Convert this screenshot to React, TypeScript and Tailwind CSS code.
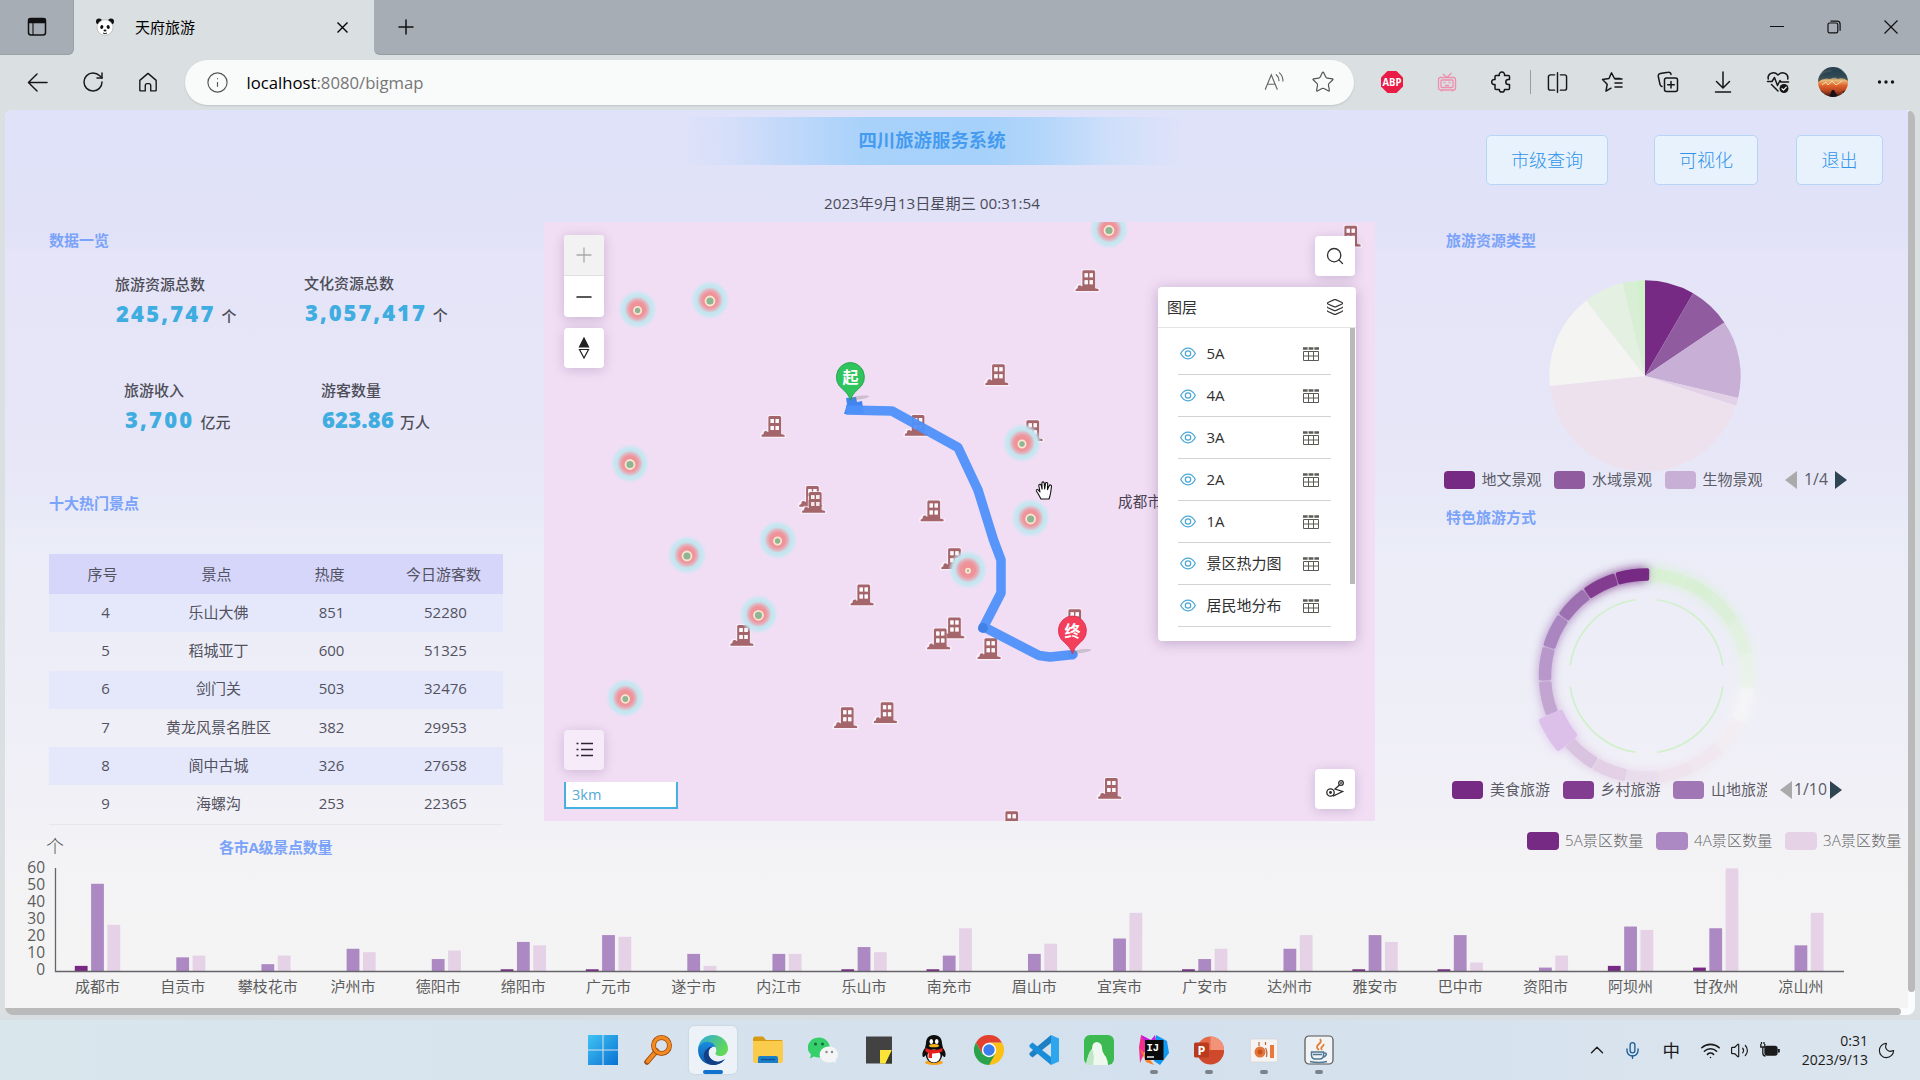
import React from "react";
import {
  RotateCw, Info, Star, Plus, Minus, X, Search, Layers, Mic, Wifi, Volume2, Moon, ChevronUp, List,
} from "lucide-react";

const SANS = "font-['Open_Sans','Noto_Sans_CJK_SC',sans-serif]";

/* ---------- browser chrome ---------- */

function Panda() {
  return (
    <svg width="20" height="20" viewBox="0 0 20 20">
      <circle cx="4" cy="4.5" r="3" fill="#111" />
      <circle cx="16" cy="4.5" r="3" fill="#111" />
      <ellipse cx="10" cy="10.5" rx="8" ry="7.8" fill="#fff" stroke="#999" strokeWidth=".5" />
      <ellipse cx="6.8" cy="10" rx="1.5" ry="2" fill="#111" transform="rotate(25 6.8 10)" />
      <ellipse cx="13.2" cy="10" rx="1.5" ry="2" fill="#111" transform="rotate(-25 13.2 10)" />
      <ellipse cx="10" cy="13.6" rx="1.5" ry="1" fill="#111" />
      <path d="M8 16q2 1.4 4 0" stroke="#111" fill="none" strokeWidth=".9" />
    </svg>
  );
}

function TabBar() {
  return (
    <div className="flex h-[54.500px] bg-[#dadfe1] shrink-0">
      <div className="w-[74px] rounded-br-md border-b border-r border-[#9aa0a7] bg-[#a7adb5] flex items-center justify-center">
        <svg width="20" height="20" viewBox="0 0 20 20" fill="none" stroke="#111" strokeWidth="1.5">
          <rect x="1.5" y="1.5" width="17" height="16.5" rx="2.5" />
          <path d="M2 2.2h16v3.3H2z" fill="#111" />
          <path d="M6 5v13" strokeWidth="1.1" />
        </svg>
      </div>
      <div className="flex w-[300px] items-center pl-[21px] text-[15px] text-black">
        <Panda />
        <span className="ml-5 w-[202px]">天府旅游</span>
        <svg width="11" height="11" viewBox="0 0 11 11" stroke="#000" strokeWidth="1.400"><path d="M.5.5l10 10M10.500.5l-10 10" /></svg>
      </div>
      <div className="flex flex-1 items-center rounded-bl-md border-b border-[#969ca3] bg-[#a7adb5] pl-[20px]">
        <Plus size={24} strokeWidth={1.5} color="#111" />
        <div className="ml-auto flex items-center">
          <div className="flex w-[57px] justify-center"><div className="h-px w-3.5 bg-[#111]" /></div>
          <div className="flex w-[57px] justify-center">
            <svg width="14" height="14" viewBox="0 0 14 14" fill="none" stroke="#111" strokeWidth="1.2">
              <rect x="1" y="3" width="9.8" height="9.8" rx="1.6" />
              <path d="M3.5 1.2h6.6a3 3 0 0 1 3 3v6.5" />
            </svg>
          </div>
          <div className="flex w-[58px] justify-center">
            <svg width="14" height="14" viewBox="0 0 14 14" stroke="#111" strokeWidth="1.2"><path d="M.5 .5l13 13M13.5 .5l-13 13" /></svg>
          </div>
        </div>
      </div>
    </div>
  );
}

function Cell({ children }: { children: React.ReactNode }) {
  return <div className="flex w-[55.2px] shrink-0 items-center justify-center text-[#1b1b1b]">{children}</div>;
}

function Stroke({ d, size = 22, w = 1.5 }: { d: string; size?: number; w?: number }) {
  return (
    <svg width={size} height={size} viewBox="0 0 22 22" fill="none" stroke="#161616" strokeWidth={w} strokeLinecap="round" strokeLinejoin="round">
      <path d={d} />
    </svg>
  );
}

function Toolbar() {
  return (
    <div className="flex h-[55.500px] shrink-0 items-center bg-[#dadfe1] pl-[10px]">
      <Cell>
        <Stroke d="M21 11H1.5M10.5 2L1.5 11l9 9" size={21} />
      </Cell>
      <Cell><RotateCw size={24} strokeWidth={1.5} /></Cell>
      <Cell>
        <Stroke d="M2 9.2L11 1.5l9 7.7V20a.8.8 0 0 1-.8.8H14v-6a2 2 0 0 0-2-2h-2a2 2 0 0 0-2 2v6H2.800a.8.8 0 0 1-.8-.8z" size={20} />
      </Cell>
      <div className="ml-[9px] flex h-[45px] w-[1169px] items-center rounded-full bg-[#f9fafa] pl-[21px] text-[16.700px] shadow-[0_1px_2px_rgba(0,0,0,0.12)]">
        <Info size={23} strokeWidth={1.2} color="#555" />
        <span className="ml-[18px] text-[#777]"><span className="text-black">localhost</span>:8080/bigmap</span>
        <div className="ml-auto flex items-center pr-[19px]">
          <svg width="20" height="20" viewBox="0 0 22 22" fill="none" stroke="#666" strokeWidth="1.3" strokeLinecap="round">
            <path d="M1.500 19L8 3l6.500 16M4 13.500h8M13.500 3q3 2.500 3 6.500M17 1q4 3.500 3.800 9" />
          </svg>
          <Star className="ml-[27px]" size={24} strokeWidth={1.2} color="#555" />
        </div>
      </div>
      <div className="ml-[10.500px] flex h-full items-center">
        <Cell>
          <svg width="22" height="22" viewBox="0 0 22 22">
            <path d="M6.500 0h9L22 6.500v9L15.500 22h-9L0 15.500v-9z" fill="#e81c46" />
            <text x="11" y="14.700" fontSize="10" fontWeight="700" textAnchor="middle" fill="#fff" textLength="19" lengthAdjust="spacingAndGlyphs" fontFamily="Open Sans, sans-serif">ABP</text>
          </svg>
        </Cell>
        <Cell>
          <svg width="20" height="20" viewBox="0 0 20 20" fill="none" stroke="#ee8fae" strokeWidth="1.300">
            <rect x="1.500" y="5.500" width="17" height="12.500" rx="2" />
            <rect x="4" y="8" width="12" height="7.500" rx="1" />
            <path d="M10 5.500L6 2M10 5.500L14.500 1M6.500 11l2-1M13.500 11l-2-1M8 13.500h4M4.500 18v1.500M15.500 18v1.500" />
          </svg>
        </Cell>
        <Cell>
          <Stroke size={22} d="M5 4.500h3.300a2.700 2.700 0 1 1 5.200 0H17.500a1 1 0 0 1 1 1V8.500h-1.200a2.500 2.500 0 0 0 0 5h1.200V17.500a1 1 0 0 1-1 1h-4a2.600 2.600 0 1 1-5.200 0H5a1 1 0 0 1-1-1v-4a2.600 2.600 0 1 1 0-5v-3a1 1 0 0 1 1-1z" />
        </Cell>
        <div className="-mr-px h-6 w-px bg-[#9a9da0]" />
        <Cell><Stroke size={21} d="M8 3H3.500a2 2 0 0 0-2 2v12a2 2 0 0 0 2 2H8M14 3h4.500a2 2 0 0 1 2 2v12a2 2 0 0 1-2 2H14M11 .8v20.500" /></Cell>
        <Cell><Stroke size={22} d="M19 7.500h-5.500L10.500 1.800 8 7.500l-6.500 1 4.700 4.700-1.200 7 5-3M14 12h7M14 16h7M14 8h7" /></Cell>
        <Cell><Stroke size={22} d="M9.500 7h9a2 2 0 0 1 2 2v9.500a2 2 0 0 1-2 2h-9a2 2 0 0 1-2-2V9a2 2 0 0 1 2-2zM14 10.500v6.500M10.700 13.700h6.600M5 15.500a3 3 0 0 1-2-2.200L1.300 5.500a2.600 2.600 0 0 1 2-3L11 1.200a2.500 2.500 0 0 1 3 2.300" /></Cell>
        <Cell><Stroke size={22} d="M11 1v15.500M4.500 10.500L11 17l6.500-6.500M3.500 21h15" /></Cell>
        <Cell>
          <svg width="24" height="24" viewBox="0 0 24 24" fill="none" stroke="#161616" strokeWidth="1.500" strokeLinecap="round" strokeLinejoin="round">
            <path d="M2.300 9C1 4 7.500.5 12 5c4.500-4.500 11-1 9.700 4M1.500 11.500H6l2.500-4 3 8 2.500-5 1 1.500h7.500M5.500 14.500L12 21" />
            <circle cx="18" cy="18.500" r="4.500" fill="#161616" stroke="none" />
            <path d="M16 18.700l1.500 1.400 2.800-3" stroke="#fff" strokeWidth="1.200" />
          </svg>
        </Cell>
        <Cell>
          <svg width="30" height="30" viewBox="0 0 30 30">
            <defs>
              <clipPath id="av"><circle cx="15" cy="15" r="15" /></clipPath>
              <linearGradient id="avg" x1="0" y1="0" x2="0" y2="1">
                <stop offset="0" stopColor="#20394c" /><stop offset=".3" stopColor="#5f6b66" /><stop offset=".45" stopColor="#e8b878" />
                <stop offset=".62" stopColor="#e0622c" /><stop offset=".8" stopColor="#b5451f" /><stop offset="1" stopColor="#2b1414" />
              </linearGradient>
            </defs>
            <g clipPath="url(#av)">
              <rect width="30" height="30" fill="url(#avg)" />
              <path d="M0 11q5-7 12-6 4-4 10-2l8 6v5q-6-5-10-2-3-3-8 0-6-2-12 3z" fill="#1f3c4d" opacity=".75" />
              <path d="M11 30l3-7h2l4 7zM0 22l5 3-5 4zM30 22l-6 3 6 4z" fill="#1a0f14" />
              <path d="M4 18l4-3 2 3 4-4 4 4 6-4" stroke="#f8dca4" fill="none" />
            </g>
          </svg>
        </Cell>
        <Cell>
          <svg className="-ml-1" width="18" height="4" viewBox="0 0 18 4" fill="#161616"><circle cx="2.500" cy="2" r="1.700" /><circle cx="9" cy="2" r="1.700" /><circle cx="15.500" cy="2" r="1.700" /></svg>
        </Cell>
      </div>
    </div>
  );
}

/* ---------- page header ---------- */

function NavButton({ label, cls }: { label: string; cls: string }) {
  return (
    <button className={`h-[50px] rounded-[5px] border border-[#b7d5f5] bg-[#e8f2fd] text-[18px] font-light text-[#2f93ea] ${cls}`}>{label}</button>
  );
}

function Header() {
  return (
    <div className="flex h-[112px] pl-[675px]">
      <div className="flex w-[504px] flex-col items-center pt-[7px]">
        <div className="flex h-[48px] w-full items-center justify-center bg-[linear-gradient(90deg,rgba(163,208,250,0)_0%,rgba(203,219,250,0.5)_10%,#c3d9fa_20%,#a9d2fa_36%,#a5d1fa_60%,#b3d6fa_72%,#cedffa_85%,rgba(200,215,250,0)_100%)]">
          <h1 className="-mt-0.5 text-[18.400px] font-bold text-[#459bef]">四川旅游服务系统</h1>
        </div>
        <div className="mt-[27px] text-[15.200px] leading-[22px] text-[#4b4b57]">2023年9月13日星期三 00:31:54</div>
      </div>
      <div className="ml-auto flex pr-[25px] pt-[25px]">
        <NavButton label="市级查询" cls="w-[122px]" />
        <NavButton label="可视化" cls="ml-[46px] w-[104px]" />
        <NavButton label="退出" cls="ml-[38px] w-[87px]" />
      </div>
    </div>
  );
}

/* ---------- left column ---------- */

function SectionTitle({ children, cls = "" }: { children: string; cls?: string }) {
  return <h2 className={`h-[22px] text-[15px] font-bold leading-[22px] text-[#7ba3f9] ${cls}`}>{children}</h2>;
}

function Stat({ label, value, unit, cls, num }: { label: string; value: string; unit: string; cls: string; num: string }) {
  return (
    <div className={cls}>
      <div className="text-[15px] font-medium leading-[22px] text-[#4d4d57]">{label}</div>
      <div className="flex h-[36px] items-baseline leading-[36px]">
        <span className={`pl-px text-[22px] font-extrabold text-[#3fade0] ${num}`}>{value}</span>
        <span className="ml-1.5 text-[15px] font-medium text-[#4d4d57]">{unit}</span>
      </div>
    </div>
  );
}

const spots = [
  ["4", "乐山大佛", "851", "52280"],
  ["5", "稻城亚丁", "600", "51325"],
  ["6", "剑门关", "503", "32476"],
  ["7", "黄龙风景名胜区", "382", "29953"],
  ["8", "阆中古城", "326", "27658"],
  ["9", "海螺沟", "253", "22365"],
];

function LeftColumn() {
  return (
    <div className="w-[539px] shrink-0 pl-[44px] pt-[7px]">
      <SectionTitle>数据一览</SectionTitle>
      <div className="mt-[22px] flex h-[106px] pl-[66px]">
        <Stat label="旅游资源总数" value="245,747" unit="个" cls="w-[189px]" num="tracking-[2.200px]" />
        <Stat label="文化资源总数" value="3,057,417" unit="个" cls="-mt-px" num="tracking-[2px]" />
      </div>
      <div className="flex h-[113px] pl-[75px]">
        <Stat label="旅游收入" value="3,700" unit="亿元" cls="w-[197px]" num="tracking-[2.200px]" />
        <Stat label="游客数量" value="623.86" unit="万人" cls="" num="tracking-[0.200px]" />
      </div>
      <SectionTitle>十大热门景点</SectionTitle>
      <div className="mt-[40px] w-[454px] border-b border-[#e6e6ee] text-[15px] text-[#525260]">
        <div className="grid h-[40px] grid-cols-[113px_113px_113px_115px] items-center bg-[#d6d6fa] text-center">
          <span className="pr-[6px]">序号</span>
          <span className="pr-[4px]">景点</span>
          <span className="pr-[4px]">热度</span>
          <span className="pr-[4px]">今日游客数</span>
        </div>
        {spots.map((r, i) => (
          <div key={r[0]} className={`grid h-[38.300px] grid-cols-[113px_113px_113px_115px] items-center pb-[2px] text-center ${i % 2 ? "" : "bg-[#e5e8fb]"}`}>
            {r.map((c, j) => (
              <span key={j} className="whitespace-nowrap">{c}</span>
            ))}
          </div>
        ))}
      </div>
    </div>
  );
}

/* ---------- map ---------- */

const heat: [number, number, number][] = [
  [637.6, 310.5, 0.8], [710, 301, 1], [1109, 230.5, 1], [630, 464.5, 1], [1022, 444, 0.8], [1030.600, 519, 1],
  [687, 556, 1], [777.600, 541, 0.8], [758.500, 615.300, 1], [968, 570.700, 0.45], [625.300, 699, 0.85],
];
const buildings: [number, number][] = [
  [1075, 270], [984.700, 364], [904.300, 414.700], [761, 415.700], [1019, 420], [798.700, 485.700], [801.500, 491.700], [920, 500.300],
  [940.700, 548], [850, 584.300], [729.800, 624.700], [940.700, 617.300], [926.500, 628.300], [977, 638], [1061, 609], [833.500, 707],
  [873.300, 702], [1097.600, 777.700], [998, 811], [1337, 225.600],
];

function Building({ x, y }: { x: number; y: number }) {
  return (
    <g transform={`translate(${x + 0.6} ${y + 0.2})`}>
      <path d="M6-1h14v19h4.500v4H-1.500V18l3.500-4.500 3.500.5z" fill="#fff" opacity=".5" />
      <path
        fillRule="evenodd"
        fill="#a5666b"
        d="M8 0h10q1.500 0 1.500 1.500V18l3.500 1v1.800H0V19.200l2-1.200q0-3 2.200-3 1.300 0 1.800 1.200l.8-.3V1.500Q6.800 0 8 0zM9 3v4h3.300V3zM14 3v4h3.300V3zM9 10v4h3.300v-4zM14 10v4h3.300v-4z"
      />
      <path d="M9 3v4h3.300V3zM14 3v4h3.300V3zM9 10v4h3.300v-4zM14 10v4h3.300v-4z" fill="#fff" opacity=".7" />
    </g>
  );
}

function Pin({ x, y, c, e, t }: { x: number; y: number; c: string; e: string; t: string }) {
  return (
    <g transform={`translate(${x} ${y})`}>
      <ellipse cx="9" cy="20.500" rx="10" ry="1.800" fill="#777" opacity=".3" transform="rotate(-8 10 21)" />
      <path d="M0 23.500C-1.500 17-7 13-11 9A14 14.500 0 1 1 11 9C7 13 1.500 17 0 23.500z" fill={c} stroke={e} strokeWidth=".8" />
      <text x="0" y="6" textAnchor="middle" fontSize="16" fontWeight="700" fill="#fff" fontFamily="Noto Sans CJK SC, sans-serif">{t}</text>
    </g>
  );
}

function Hand() {
  return (
    <svg x="1035.500" y="480.500" width="19" height="20" viewBox="0 0 19 20">
      <path
        d="M5.500 18.500L2.800 13.500.8 10.500c-.5-1.300 1-2 1.900-1.100L4.500 11.500 3.300 5c0-1.500 1.900-1.700 2.300-.3l1 4-.2-6.200c.1-1.500 2.100-1.500 2.300 0l.5 6 .8-5.700c.4-1.300 2.200-1 2.200.3l-.2 6 1.800-4c.7-1.200 2.300-.8 2.200.6L15.200 12l-.9 4-.8 2.500z"
        fill="#fff" stroke="#111" strokeWidth="1.100" strokeLinejoin="round"
      />
    </svg>
  );
}

const layers = ["5A", "4A", "3A", "2A", "1A", "景区热力图", "居民地分布"];

function EyeIcon() {
  return (
    <svg width="16" height="13" viewBox="0 0 16 13" fill="none" stroke="#4ba6d8" strokeWidth="1.200">
      <path d="M.7 6.500Q3.500 1.200 8 1.200t7.300 5.300Q12.500 11.800 8 11.800T.7 6.500z" />
      <circle cx="8" cy="6.500" r="2.700" />
    </svg>
  );
}

function TableIcon() {
  return (
    <svg width="16" height="14" viewBox="0 0 16 14" fill="none" stroke="#5b5b55" strokeWidth="1">
      <path d="M0 1.500h4.600M5.600 1.500h4.800M11.400 1.500H16" strokeWidth="2.600" />
      <path d="M.5 4.500h15v9H.5zM.5 9h15M5.500 4.500v9M10.500 4.500v9" />
    </svg>
  );
}

const ctl = "absolute flex h-10 w-10 items-center justify-center rounded-[4px] shadow-[0_2px_12px_rgba(80,50,110,0.22)]";

function MapPanel() {
  return (
    <div className="relative h-[599px] w-[831px] shrink-0 overflow-hidden bg-[#f1def4]">
      <svg width="831" height="599" viewBox="544 222 831 599" className="block">
        <defs>
          <radialGradient id="heat">
            <stop offset="0" stopColor="#f28a90" />
            <stop offset=".38" stopColor="#ee959c" />
            <stop offset=".52" stopColor="#e0b4c0" stopOpacity=".95" />
            <stop offset=".64" stopColor="#c5e3ed" />
            <stop offset=".78" stopColor="#c4e7f1" stopOpacity=".95" />
            <stop offset="1" stopColor="#d9e2f5" stopOpacity="0" />
          </radialGradient>
        </defs>
        {buildings.map(([x, y], i) => <Building key={i} x={x} y={y} />)}
        {heat.map(([x, y, s], i) => (
          <g key={i}>
            <circle cx={x} cy={y - 1} r="20" fill="url(#heat)" />
            <circle cx={x} cy={y} r={4.500 * s} fill="#8fb595" stroke="#f8e6cf" strokeWidth="1.800" />
          </g>
        ))}
        <path d="M846 398l10-1 1 5 5-1 2 13h-20l3-10z" fill="#4285f0" />
        <path d="M846 410L892 411L958 447.500L978 490L993.500 540L1001 560V593L983 628M980 625L1039 655.500L1050 657L1074 654.500" fill="none" stroke="#4f90fa" strokeOpacity=".95" strokeWidth="9.500" strokeLinejoin="round" />
        <circle cx="983" cy="628" r="5" fill="#4282e6" />
        <circle cx="1073" cy="654.500" r="4.700" fill="#4f90fa" />
        <Pin x={850.4} y={377} c="#2fc45e" e="#1b9a46" t="起" />
        <Pin x={1072.4} y={630.5} c="#f33f5b" e="#d92c48" t="终" />
        <text x="1118" y="507" fontSize="14.500" letterSpacing=".3" fill="#4a4150" fontFamily="Noto Sans CJK SC, sans-serif">成都市</text>
        <Hand />
      </svg>

      <div className="absolute left-5 top-[13px] flex h-[82px] w-10 flex-col overflow-hidden rounded-[4px] bg-white shadow-[0_2px_12px_rgba(80,50,110,0.25)]">
        <div className="flex h-[41px] items-center justify-center border-b border-[#e0dfe0] bg-[#f3f2f3]"><Plus size={24} strokeWidth={1.300} color="#aaa8aa" /></div>
        <div className="flex flex-1 items-center justify-center"><Minus size={24} strokeWidth={1.500} color="#222" /></div>
      </div>
      <div className={`${ctl} left-5 top-[106px] bg-white`}>
        <svg width="12" height="22" viewBox="0 0 12 22" stroke="#222" fill="none" strokeWidth="1.200"><path d="M6 1l4.500 9h-9z" fill="#222" /><path d="M1.500 12.500h9L6 21z" /></svg>
      </div>
      <div className={`${ctl} left-5 top-[507.500px] bg-[#f6ebf8]`}>
        <svg width="17" height="15" viewBox="0 0 17 15" stroke="#2c2430" strokeWidth="1.500"><path d="M5 1.500h12M5 7.500h12M5 13.500h12M.5 1.500h2M.5 7.500h2M.5 13.500h2" /></svg>
      </div>
      <div className="absolute left-5 top-[560px] h-[27px] w-[114px] border-2 border-t-0 border-[#45b1e0] bg-white pl-1.5 text-[14.500px] leading-[25px] text-[#56a9d4]">3km</div>
      <div className={`${ctl} left-[771px] top-[13.500px] bg-white`}><Search size={20} strokeWidth={1.600} color="#333" /></div>
      <div className={`${ctl} left-[771px] top-[547px] bg-white`}>
        <svg width="18" height="18" viewBox="0 0 18 18" fill="none" stroke="#2a2a2a" strokeWidth="1.300"><circle cx="4.500" cy="12.500" r="3.700" /><circle cx="4.500" cy="12.500" r=".8" fill="#2a2a2a" /><circle cx="15" cy="3" r="2.300" /><circle cx="15" cy="3" r=".3" /><path d="M8.500 15.500l8-4-7.500-2.500L13.500 5M7 16.200l3-1.500" /></svg>
      </div>

      <div className="absolute left-[614px] top-[65px] flex h-[354px] w-[198px] flex-col overflow-hidden rounded-[4px] bg-white text-[15px] text-[#303030] shadow-[0_2px_14px_rgba(80,50,110,0.3)]">
        <div className="flex h-[41px] shrink-0 items-center justify-between border-b border-[#e4e4e6] pl-[9px] pr-3">
          <span>图层</span>
          <Layers size={18} strokeWidth={1.500} color="#333" />
        </div>
        <div className="flex">
          <div className="w-[192px] pl-[19.500px] pt-[5px]">
            {layers.map((l) => (
              <div key={l} className="flex h-[42px] w-[153px] items-center border-b border-[#d2d2d4] pl-0.5">
                <EyeIcon />
                <span className="ml-[11px] flex-1">{l}</span>
                <span className="mr-3"><TableIcon /></span>
              </div>
            ))}
          </div>
          <div className="h-[256px] w-[5px] bg-[#b9b9b9]" />
        </div>
      </div>
    </div>
  );
}

/* ---------- right column ---------- */

function polar(cx: number, cy: number, r: number, deg: number) {
  const a = (deg * Math.PI) / 180;
  return `${(cx + r * Math.sin(a)).toFixed(2)} ${(cy - r * Math.cos(a)).toFixed(2)}`;
}

const pie: [number, number, string][] = [
  [0, 30.2, "#762a83"], [30.2, 56, "#905b9f"], [56, 103.3, "#c7afd5"], [103.3, 108.1, "#e3d1e7"],
  [108.1, 264, "#ede1ed"], [264, 322.2, "#f4f4f3"], [322.2, 346.5, "#e4f1e2"], [346.500, 355, "#d9efd5"], [355, 360, "#d0f2c8"],
];

const ring = [
  "#762a83", "#833d90", "#9d70b1", "#aa86c0", "#b898ca", "#c2a5d0", "#dcc0ea", "#d9c3e0", "#e3d0e6", "#e8daea",
  "#eee1ec", "#f0e5ee", "#f3edf1", "#f7f7f7", "#e9f4e7", "#e0f2dc", "#d9f0d3", "#d5f1cd", "#d5f2cc",
];

function ringPath(i: number) {
  const step = 18.93;
  const big = i === 6;
  const a = -(i * step - 1.8 + 1.3);
  const b = -((i + 1) * step - 1.8 - 1.3);
  const ro = big ? 114 : 106;
  const ri = big ? 93 : 97;
  return `M${polar(1646.5, 676, ro, a)}A${ro} ${ro} 0 0 0 ${polar(1646.5, 676, ro, b)}L${polar(1646.5, 676, ri, b)}A${ri} ${ri} 0 0 1 ${polar(1646.5, 676, ri, a)}Z`;
}

function Legend({ items, page, cls, gap }: { items: [string, string, string][]; page: string; cls: string; gap: string }) {
  return (
    <div className={`relative flex h-[18px] items-center text-[15px] leading-[18px] text-[#5c5c66] ${cls}`}>
      {items.map(([c, t, w]) => (
        <React.Fragment key={t}>
          <span className={`h-[18px] w-[31px] shrink-0 rounded-[4px] ${c}`} />
          <span className={`ml-[7px] mr-[12.500px] -mt-[3px] shrink-0 overflow-hidden whitespace-nowrap ${w}`}>{t}</span>
        </React.Fragment>
      ))}
      <svg className={gap} width="12" height="18" viewBox="0 0 12 18"><path d="M12 0v18L0 9z" fill="#aaa" /></svg>
      <span className="-mt-[3px] w-[38px] text-center text-[15.800px]">{page}</span>
      <svg width="12" height="18" viewBox="0 0 12 18"><path d="M0 0v18L12 9z" fill="#2f4554" /></svg>
    </div>
  );
}

function RightColumn() {
  return (
    <div className="w-[533px] shrink-0 pt-[7px]">
      <SectionTitle cls="pl-[71px]">旅游资源类型</SectionTitle>
      <svg className="block overflow-visible" width="533" height="220" viewBox="1375 251 533 220">
        {pie.map(([a, b, c]) => (
          <path key={a} fill={c} d={`M1645 376L${polar(1645, 376, 95.7, a)}A95.7 95.7 0 ${b - a > 180 ? 1 : 0} 1 ${polar(1645, 376, 95.7, b)}Z`} />
        ))}
      </svg>
      <Legend
        cls="pl-[68.500px]"
        gap="ml-[10px]"
        page="1/4"
        items={[["bg-[#762a83]", "地文景观", "w-[60px]"], ["bg-[#905b9f]", "水域景观", "w-[60px]"], ["bg-[#c7afd5]", "生物景观", "w-[60px]"]]}
      />
      <SectionTitle cls="mt-[17px] pl-[71px]">特色旅游方式</SectionTitle>
      <svg className="block overflow-visible" width="533" height="253" viewBox="1375 528 533 253">
        <defs><filter id="glow" x="-20%" y="-20%" width="140%" height="140%"><feGaussianBlur stdDeviation="5" /></filter></defs>
        <g filter="url(#glow)" opacity=".75">
          {ring.map((c, i) => <path key={i} d={ringPath(i)} fill={c} stroke={c} strokeWidth="6" />)}
        </g>
        {ring.map((c, i) => <path key={i} d={ringPath(i)} fill={c} stroke={c} strokeWidth={i === 6 ? 5 : 3.5} strokeLinejoin="round" opacity={i > 8 ? 0.45 : 1} />)}
        <g fill="none" stroke="#d0f0ca" strokeWidth="1.700">
          {[8, 98, 188, 278].map((a) => (
            <path key={a} d={`M${polar(1646.5, 676, 77, a)}A77 77 0 0 1 ${polar(1646.5, 676, 77, a + 74)}`} />
          ))}
        </g>
      </svg>
      <Legend
        cls="pl-[77px]"
        gap="ml-0"
        page="1/10"
        items={[["bg-[#762a83]", "美食旅游", "w-[60px]"], ["bg-[#833d90]", "乡村旅游", "w-[60px]"], ["bg-[#a077b4]", "山地旅游", "w-[56px]"]]}
      />
    </div>
  );
}

/* ---------- bar chart ---------- */

const cities: [string, number, number, number][] = [
  ["成都市", 3, 51, 27], ["自贡市", 0, 8, 9], ["攀枝花市", 0, 4, 9], ["泸州市", 0, 13, 11], ["德阳市", 0, 7, 12],
  ["绵阳市", 1, 17, 15], ["广元市", 1, 21, 20], ["遂宁市", 0, 10, 3], ["内江市", 0, 10, 10], ["乐山市", 1, 14, 11],
  ["南充市", 1, 9, 25], ["眉山市", 0, 10, 16], ["宜宾市", 0, 19, 34], ["广安市", 1, 7, 13], ["达州市", 0, 13, 21],
  ["雅安市", 1, 21, 17], ["巴中市", 1, 21, 5], ["资阳市", 0, 2, 9], ["阿坝州", 3, 26, 24], ["甘孜州", 2, 25, 60], ["凉山州", 0, 15, 34],
];
const series: [string, string][] = [["5A景区数量", "bg-[#762a83]"], ["4A景区数量", "bg-[#ad89c3]"], ["3A景区数量", "bg-[#e5d2e7]"]];
const fills = ["#762a83", "#ad89c3", "#e5d2e7"];

function BarChart() {
  return (
    <div className="h-[187px]">
      <div className="flex h-[39px] pl-[41px] pt-[11px]">
        <span className="mt-[3px] text-[18px] font-light leading-[22px] text-[#555]">个</span>
        <SectionTitle cls="ml-[155px] mt-[4px] tracking-[-0.250px]">各市A级景点数量</SectionTitle>
        <div className="ml-auto flex h-[18px] items-center pr-[5px]">
          {series.map(([t, c], i) => (
            <div key={t} className={`flex items-center ${i ? "ml-[11px]" : ""}`}>
              <span className={`h-[18px] w-[32px] rounded-[4px] ${c}`} />
              <span className="-mt-[3px] ml-[6px] w-[80px] whitespace-nowrap text-[15px] font-light leading-[18px] text-[#666] tracking-[0.150px]">{t}</span>
            </div>
          ))}
        </div>
      </div>
      <svg className="block" width="1903" height="148" viewBox="5 860 1903 148" fontFamily="Open Sans, Noto Sans CJK SC, sans-serif" fontSize="15" fill="#5c5c5c">
        {[0, 10, 20, 30, 40, 50, 60].map((v) => (
          <text key={v} x="45" y={974.5 - v * 1.695} textAnchor="end" fontSize="15.500">{v}</text>
        ))}
        {cities.map(([n, ...vals], i) => {
          const c = 98 + i * 85.17;
          return (
            <g key={n}>
              {vals.map((v, j) => (v ? <rect key={j} x={c - 23.2 + j * 16.3} y={971 - v * 1.71} width="12.800" height={v * 1.71} fill={fills[j]} /> : null))}
              <text x={c - 0.5} y="992" textAnchor="middle">{n}</text>
            </g>
          );
        })}
        <path d="M55.500 868V971.500H1844" fill="none" stroke="#66636a" strokeWidth="1.300" />
      </svg>
    </div>
  );
}

/* ---------- taskbar ---------- */

function Svg({ children }: { children: React.ReactNode }) {
  return <svg width="30" height="30" viewBox="0 0 30 30">{children}</svg>;
}

const apps: { icon: React.ReactNode; dot?: boolean; active?: boolean }[] = [
  { icon: <Svg><defs><linearGradient id="w" x1="0" y1="0" x2="1" y2="1"><stop offset="0" stopColor="#3fc4f4" /><stop offset="1" stopColor="#0a71d2" /></linearGradient></defs><path d="M0 0h14.500v14.500H0zM15.500 0H30v14.500H15.500zM0 15.500h14.500V30H0zM15.500 15.500H30V30H15.500z" fill="url(#w)" /></Svg> },
  { icon: <Svg><path d="M13.500 16L4 27" stroke="#a34b0c" strokeWidth="5.500" strokeLinecap="round" /><path d="M13.500 16L4.500 26.500" stroke="#f28a22" strokeWidth="3.500" strokeLinecap="round" /><circle cx="18.500" cy="10.500" r="8" fill="none" stroke="#a34b0c" strokeWidth="5" /><circle cx="18.500" cy="10.500" r="8" fill="none" stroke="#f28a22" strokeWidth="3.400" /></Svg> },
  { active: true, icon: <Svg><defs><linearGradient id="e1" x1="0" y1="0" x2="1" y2=".5"><stop offset="0" stopColor="#2aa7e4" /><stop offset="1" stopColor="#63d957" /></linearGradient><linearGradient id="e2" x1="0" y1="0" x2="0" y2="1"><stop offset="0" stopColor="#1a8be0" /><stop offset="1" stopColor="#0e5aa9" /></linearGradient></defs><path d="M0 14C1 5 7.500 0 15 0c9 0 15 6.500 15 13.500 0 5-4 7.500-7.500 7.500-3.500 0-5.500-1.500-5-3 1.500-2 1.500-6-3.500-8.500C9 7.500 3 9 0 14z" fill="url(#e1)" /><path d="M0 15c.5-6 6-9 11-8 4 .8 6 3 6.500 5-3-1-7 1-7 6 0 6 6 9.500 11 8.500 2-.5 4-1.500 5.500-2.800C25 27.500 20.500 30 15 30 6.500 30 0 23.500 0 15z" fill="url(#e2)" /><path d="M10.500 18c0 6 6 9.500 11 8.500 2-.5 4-1.500 5.500-2.800C24.500 27.500 20 30 15 30 9 29 5 25 6 19c.6-4 5-7.500 9-7.500-2.500 1-4.500 3-4.500 6.500z" fill="#123f86" /></Svg> },
  { icon: <Svg><path d="M0 4q0-2.500 2-2.500h8l3 3.500H28q2 0 2 2v4H0z" fill="#d69a15" /><path d="M0 6h30v20q0 2-2 2H2q-2 0-2-2z" fill="#fbcb4c" /><path d="M5 28v-5q0-2 2-2h16q2 0 2 2v5z" fill="#1c7fc9" /><path d="M8 24.500h14" stroke="#0c5696" strokeWidth="1.500" /></Svg> },
  { icon: <Svg><path d="M11 2.500a11 10 0 0 0-8 17l-1 4 4-2a11 10 0 1 0 5-19z" fill="#36cf6b" /><circle cx="7.500" cy="9" r="1.500" fill="#16693a" /><circle cx="14.500" cy="9" r="1.500" fill="#16693a" /><path d="M21 11.500a9 8 0 1 0 4 15l3 1.500-.6-3a9 8 0 0 0-6.400-13.500z" fill="#f4f6f6" /><circle cx="18.500" cy="17" r="1.200" fill="#888" /><circle cx="24" cy="17" r="1.200" fill="#888" /></Svg> },
  { icon: <Svg><path d="M2 1.500h26v27H2z" fill="#424242" /><path d="M16 15h12l-6.500 13.500H16z" fill="#fbe338" /><path d="M28 15v13.500h-6.500z" fill="#3a3a2c" /></Svg> },
  { icon: <Svg><ellipse cx="15" cy="27.500" rx="9" ry="2.500" fill="#f3a61e" /><path d="M15 0c-5.500 0-8 4-8 8.500L6 13c-3 4-3 7-2 9 1 .5 2-1 2.500-2C8 26 11 28 15 28s7-2 8.500-8c.5 1 1.500 2.500 2.500 2 1-2 1-5-2-9l-1-4.500C23 4 20.500 0 15 0z" fill="#0d0d0d" /><ellipse cx="15" cy="21" rx="6.500" ry="6.500" fill="#fff" /><ellipse cx="12.300" cy="6.500" rx="1.800" ry="2.600" fill="#fff" /><ellipse cx="17.700" cy="6.500" rx="1.800" ry="2.600" fill="#fff" /><ellipse cx="15" cy="10.700" rx="5" ry="1.600" fill="#f6b21b" /><path d="M6.500 13q8.500 4 17 0v3.500q-6 2.500-10.500 2v4.500H9.500v-5l-3-1.500z" fill="#e3201b" /></Svg> },
  { icon: <Svg><path d="M15 30A15 15 0 0 0 28 7.500H15z" fill="#fbc116" /><path d="M2 7.500L8.500 18.800 15 22l6.500-3.500L15 30A15 15 0 0 1 2 7.500z" fill="#2da24d" /><path d="M2 7.500A15 15 0 0 1 28 7.500H15L8.500 18.800z" fill="#e4402f" /><circle cx="15" cy="15" r="7.200" fill="#fff" /><circle cx="15" cy="15" r="5.700" fill="#3b7ded" /></Svg> },
  { icon: <Svg><path d="M22 0l8 3.500v23L22 30z" fill="#2ea6ee" /><path d="M22 0v8L3.500 22.500.5 20v-2z" fill="#1d7fc4" /><path d="M22 30v-8L3.500 7.500.5 10v2z" fill="#1a8dd8" /></Svg> },
  { icon: <Svg><rect width="30" height="30" rx="6" fill="#3cb950" /><path d="M2 30Q4 18 8 14q0-7 5-7 5 1 5 6 0 4 4 9 2 4 2 8z" fill="#eef8ef" /><path d="M2 30Q4 18 8 14q3 6 1 16z" fill="#bfe6c5" /></Svg> },
  { dot: true, icon: <Svg><path d="M2 0l9 5-7 16-3 7L0 12z" fill="#f2308b" /><path d="M17 0l11 6 2 12-9 12-6-4z" fill="#1198f0" /><path d="M1 14l8 8 6 8-8-3z" fill="#f9812a" /><path d="M2 0l10 5 4-5 1 6-10 4z" fill="#c31de0" /><rect x="6" y="5" width="18.500" height="20" fill="#0a0a0a" /><path d="M8 22h7" stroke="#fff" strokeWidth="1.400" /><text x="7.500" y="15.500" fontSize="10.500" fontWeight="700" fill="#fff" fontFamily="Liberation Mono, monospace">IJ</text></Svg> },
  { dot: true, icon: <Svg><circle cx="16.500" cy="15" r="13.500" fill="#e4694a" /><path d="M16.500 1.500A13.500 13.500 0 0 1 30 15H16.500z" fill="#f29378" /><path d="M3 17a13.500 13.500 0 0 0 27-2H16.500z" fill="#cf4a2c" /><rect x="0" y="7.500" width="15" height="15" rx="1.500" fill="#b93a1e" /><text x="7.500" y="19.500" fontSize="12.500" fontWeight="700" textAnchor="middle" fill="#fff" fontFamily="Open Sans, sans-serif">P</text></Svg> },
  { dot: true, icon: <Svg><rect x="1.500" y="4" width="27" height="23" rx="2" fill="#f6f4f3" stroke="#d5d0d0" strokeWidth=".6" /><circle cx="11" cy="17" r="5.500" fill="#e3763b" /><circle cx="11" cy="17" r="2.500" fill="#c9531c" /><path d="M10 11V7M16.500 10V7M16.500 13q2 3 1 9" stroke="#c2602f" strokeWidth="1.200" fill="none" /><rect x="21" y="10" width="4" height="13" fill="#e8783c" /></Svg> },
  { dot: true, icon: <Svg><rect x="1" y="1" width="28" height="28" rx="4" fill="#f2f3f4" stroke="#555" strokeWidth="1.200" /><path d="M15 15q-4-3 0-6 3-2.500 1-5M18 15q-2-2 1-4 1-1 .5-2" fill="none" stroke="#e47a2a" strokeWidth="1.700" /><path d="M7.500 17h12v3q0 4-4 4h-4q-4 0-4-4zM19.500 18q4-.5 2.500 2t-3 2" fill="none" stroke="#4f7896" strokeWidth="1.500" /><path d="M9 19.500h9M6 26.500q9 2 17 0" stroke="#4f7896" strokeWidth="1.300" fill="none" /></Svg> },
];

function Taskbar() {
  return (
    <div className="flex h-[60px] shrink-0 items-center bg-[linear-gradient(90deg,#d9e6ec_0%,#d6e3ee_35%,#d3e0ed_60%,#dbe5ee_100%)] pl-[575.500px]">
      {apps.map((a, i) => (
        <div key={i} className="flex w-[55.100px] shrink-0 justify-center">
          <div className={`relative flex h-12 w-12 items-center justify-center rounded-[5px] ${a.active ? "bg-[#edf2f8] shadow-[0_0_2px_rgba(0,0,0,0.15)]" : ""}`}>
            {a.icon}
            {a.active && <div className="absolute bottom-0 left-3.5 h-[4px] w-5 rounded-full bg-[#1273cf]" />}
            {a.dot && <div className="absolute bottom-0 left-5 h-[4px] w-2 rounded-full bg-[#7b8289]" />}
          </div>
        </div>
      ))}
      <div className="ml-auto flex items-center text-[#1b1b1b]">
        <ChevronUp size={22} strokeWidth={1.500} />
        <Mic className="ml-[15px]" size={19} strokeWidth={1.700} color="#1a5d9a" />
        <span className="ml-[21px] text-[17.500px] leading-[20px]">中</span>
        <Wifi className="ml-[20px]" size={21} strokeWidth={1.800} />
        <Volume2 className="ml-[9px]" size={19} strokeWidth={1.500} />
        <svg className="ml-[11px]" width="20" height="16" viewBox="0 0 20 16" fill="none" stroke="#1b1b1b" strokeWidth="1.300"><rect x="5" y="4.500" width="12" height="8.500" rx="2" fill="#1b1b1b" /><path d="M18.800 7v3.500" strokeWidth="2" /><path d="M.8 2v3h4V2M2.800 5v6q0 3 2.700 3M1.500 0v2M4 0v2" /></svg>
        <div className="ml-[14px] w-[74px] text-right text-[14px] leading-[19px]">0:31<br />2023/9/13</div>
        <Moon className="ml-[9px] mr-[24px]" size={19} strokeWidth={1.400} />
      </div>
    </div>
  );
}

export default function App() {
  return (
    <div className={`flex h-[1080px] w-[1920px] flex-col overflow-hidden bg-[#dadfe1] ${SANS}`}>
      <TabBar />
      <Toolbar />
      <div className="ml-[5px] flex h-[905px] w-[1910px] shrink-0 overflow-hidden rounded-[8px] bg-[#fbfcfd]">
        <div className="flex w-[1903px] shrink-0 flex-col">
          <div className="h-[898px] bg-[linear-gradient(180deg,#dfe2f9_0%,#e1e2f8_14%,#e5e4f8_16%,#e7e7f8_40%,#eaecf7_48%,#eeeef7_64%,#f1f0f7_76%,#f3f3f5_84%,#f4f4f4_100%)]">
            <Header />
            <div className="flex h-[599px]">
              <LeftColumn />
              <MapPanel />
              <RightColumn />
            </div>
            <BarChart />
          </div>
          <div className="h-[7px] w-[1896px] rounded-r-full bg-[#b9bab9]" />
        </div>
        <div className="h-[882px] w-[7px] rounded-full bg-[#b9bab9]" />
      </div>
      <div className="h-[5px] shrink-0 bg-[#d8dee2]" />
      <Taskbar />
    </div>
  );
}
